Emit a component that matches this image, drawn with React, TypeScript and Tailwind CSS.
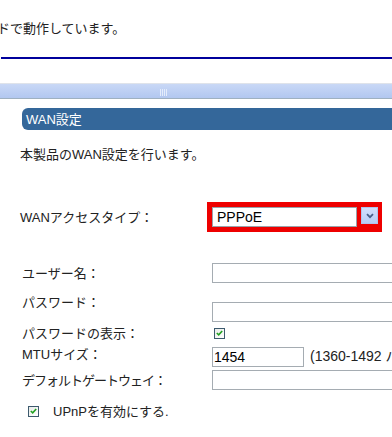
import React from "react";

const font = {
  fontFamily: '"Liberation Sans", "Noto Sans CJK JP", sans-serif',
};

function Check({ className = "" }: { className?: string }) {
  return (
    <div
      className={`w-[11px] h-[11px] shrink-0 border border-[#3d5a6e] bg-gradient-to-br from-[#e8ebe8] to-white flex items-center justify-center ${className}`}
    >
      <svg width="7" height="6" viewBox="0 0 7 6">
        <path d="M0.8 3 L2.7 4.8 L6.2 1" stroke="#21a121" strokeWidth="1.6" fill="none" />
      </svg>
    </div>
  );
}

function Input({ className = "" }: { className?: string }) {
  return <div className={`h-[20px] border border-[#a5acb2] bg-white ${className}`} />;
}

export default function App() {
  return (
    <div
      className="w-[392px] h-[437px] bg-white overflow-hidden text-[13px] leading-[15px] text-[#222]"
      style={font}
    >
      {/* top text */}
      <div className="h-[57px] pt-[21px] whitespace-nowrap overflow-hidden">
        <span className="-ml-[16px] inline-block">ードで動作しています。</span>
      </div>
      {/* blue rule */}
      <div className="ml-[1px] h-[2px] bg-[#00009c]" />
      <div className="h-[24px]" />
      {/* splitter bar */}
      <div className="h-[1px] bg-[#dfe3ea]" />
      <div className="h-[14px] bg-gradient-to-b from-[#c9d8f6] to-[#b2c7f0] flex items-center">
        <div className="ml-[160px] flex gap-[1px] h-[7px] mt-[3px]">
          <div className="w-[1px] bg-[#e4ecfb]" />
          <div className="w-[1px] bg-[#e4ecfb]" />
          <div className="w-[1px] bg-[#e4ecfb]" />
          <div className="w-[1px] bg-[#e4ecfb]" />
        </div>
      </div>
      <div className="h-[1px] bg-[#9fb0c0]" />
      <div className="h-[9px]" />
      {/* header */}
      <div className="ml-[22px] h-[22px] rounded-l-[6px] bg-[#34679a] text-white pl-[4px] flex items-center">
        WAN設定
      </div>
      {/* description */}
      <div className="mt-[17px] ml-[20px] whitespace-nowrap">本製品のWAN設定を行います。</div>

      {/* WAN access type */}
      <div className="mt-[40px] h-[30px] flex items-center">
        <div className="ml-[20px] w-[187px] shrink-0 whitespace-nowrap pt-[1px]">WANアクセスタイプ：</div>
        <div className="bg-[#ee0000] p-[5px] pr-[4px] flex items-start gap-[4px] shrink-0">
          <div className="w-[145px] h-[20px] bg-white border border-[#9aa2aa] pl-[4px] text-[14px] leading-[18px] text-black">
            PPPoE
          </div>
          <div className="w-[17px] h-[17px] bg-gradient-to-b from-[#d2defc] to-[#b8cdf6] border border-[#b0c4ee] flex items-center justify-center">
            <svg width="8" height="6" viewBox="0 0 8 6">
              <path d="M1 1.2 L4 4.2 L7 1.2" stroke="#4a5f8a" strokeWidth="1.8" fill="none" />
            </svg>
          </div>
        </div>
      </div>

      {/* user name */}
      <div className="mt-[31px] h-[20px] flex items-center">
        <div className="ml-[22px] w-[190px] shrink-0 whitespace-nowrap">ユーザー名：</div>
        <Input className="flex-1 -mr-[10px]" />
      </div>

      {/* password */}
      <div className="mt-[12px] flex items-start">
        <div className="ml-[22px] w-[190px] shrink-0 whitespace-nowrap">パスワード：</div>
        <Input className="flex-1 -mr-[10px] mt-[7px]" />
      </div>

      {/* show password */}
      <div className="mt-[5px] h-[12px] flex items-center">
        <div className="ml-[22px] w-[192px] shrink-0 whitespace-nowrap">パスワードの表示：</div>
        <Check />
      </div>

      {/* MTU */}
      <div className="mt-[8px] h-[20px] flex items-start overflow-hidden">
        <div className="ml-[22px] w-[190px] shrink-0 whitespace-nowrap">MTUサイズ：</div>
        <div className="w-[92px] shrink-0 h-[20px] border border-[#a5acb2] pl-[1px] text-[14px] leading-[18px] text-black">1454</div>
        <div className="ml-[6px] shrink-0 whitespace-nowrap pt-[2px] text-[14px]">(1360-1492 バイト)</div>
      </div>

      {/* gateway */}
      <div className="mt-[3px] h-[20px] flex items-center">
        <div className="ml-[22px] w-[190px] shrink-0 whitespace-nowrap tracking-[-1px]">デフォルトゲートウェイ：</div>
        <Input className="flex-1 -mr-[10px]" />
      </div>

      {/* UPnP */}
      <div className="mt-[15px] h-[12px] flex items-center">
        <Check className="ml-[28px]" />
        <div className="ml-[14px] whitespace-nowrap">UPnPを有効にする.</div>
      </div>
    </div>
  );
}
